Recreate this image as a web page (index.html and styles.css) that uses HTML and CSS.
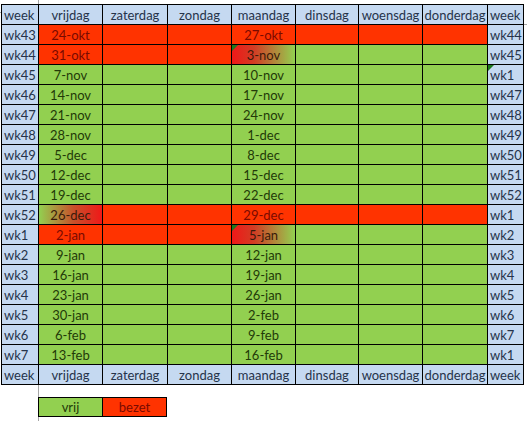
FILE: index.html
```html
<!DOCTYPE html>
<html>
<head>
<meta charset="utf-8">
<link rel="stylesheet" href="styles.css">
</head>
<body>
<div class="sheet">
  <div class="h l">week</div><div class="h">vrijdag</div><div class="h">zaterdag</div><div class="h">zondag</div><div class="h">maandag</div><div class="h">dinsdag</div><div class="h">woensdag</div><div class="h">donderdag</div><div class="h l">week</div>

  <div class="w">wk43</div><div class="r">24-okt</div><div class="r"></div><div class="r"></div><div class="r">27-okt</div><div class="r"></div><div class="r"></div><div class="r"></div><div class="w">wk44</div>
  <div class="w">wk44</div><div class="r">31-okt</div><div class="r"></div><div class="r"></div><div class="gr tri">3-nov</div><div class="g"></div><div class="g"></div><div class="g"></div><div class="w">wk45</div>
  <div class="w">wk45</div><div class="g">7-nov</div><div class="g"></div><div class="g"></div><div class="g">10-nov</div><div class="g"></div><div class="g"></div><div class="g"></div><div class="w tri">wk1</div>
  <div class="w">wk46</div><div class="g">14-nov</div><div class="g"></div><div class="g"></div><div class="g">17-nov</div><div class="g"></div><div class="g"></div><div class="g"></div><div class="w">wk47</div>
  <div class="w">wk47</div><div class="g">21-nov</div><div class="g"></div><div class="g"></div><div class="g">24-nov</div><div class="g"></div><div class="g"></div><div class="g"></div><div class="w">wk48</div>
  <div class="w">wk48</div><div class="g">28-nov</div><div class="g"></div><div class="g"></div><div class="g">1-dec</div><div class="g"></div><div class="g"></div><div class="g"></div><div class="w">wk49</div>
  <div class="w">wk49</div><div class="g">5-dec</div><div class="g"></div><div class="g"></div><div class="g">8-dec</div><div class="g"></div><div class="g"></div><div class="g"></div><div class="w">wk50</div>
  <div class="w">wk50</div><div class="g">12-dec</div><div class="g"></div><div class="g"></div><div class="g">15-dec</div><div class="g"></div><div class="g"></div><div class="g"></div><div class="w">wk51</div>
  <div class="w">wk51</div><div class="g">19-dec</div><div class="g"></div><div class="g"></div><div class="g">22-dec</div><div class="g"></div><div class="g"></div><div class="g"></div><div class="w">wk52</div>
  <div class="w">wk52</div><div class="rg">26-dec</div><div class="r"></div><div class="r"></div><div class="r">29-dec</div><div class="r"></div><div class="r"></div><div class="r"></div><div class="w">wk1</div>
  <div class="w">wk1</div><div class="r">2-jan</div><div class="r"></div><div class="r"></div><div class="gr tri">5-jan</div><div class="g"></div><div class="g"></div><div class="g"></div><div class="w">wk2</div>
  <div class="w">wk2</div><div class="g">9-jan</div><div class="g"></div><div class="g"></div><div class="g">12-jan</div><div class="g"></div><div class="g"></div><div class="g"></div><div class="w">wk3</div>
  <div class="w">wk3</div><div class="g">16-jan</div><div class="g"></div><div class="g"></div><div class="g">19-jan</div><div class="g"></div><div class="g"></div><div class="g"></div><div class="w">wk4</div>
  <div class="w">wk4</div><div class="g">23-jan</div><div class="g"></div><div class="g"></div><div class="g">26-jan</div><div class="g"></div><div class="g"></div><div class="g"></div><div class="w">wk5</div>
  <div class="w">wk5</div><div class="g">30-jan</div><div class="g"></div><div class="g"></div><div class="g">2-feb</div><div class="g"></div><div class="g"></div><div class="g"></div><div class="w">wk6</div>
  <div class="w">wk6</div><div class="g">6-feb</div><div class="g"></div><div class="g"></div><div class="g">9-feb</div><div class="g"></div><div class="g"></div><div class="g"></div><div class="w">wk7</div>
  <div class="w">wk7</div><div class="g">13-feb</div><div class="g"></div><div class="g"></div><div class="g">16-feb</div><div class="g"></div><div class="g"></div><div class="g"></div><div class="w">wk1</div>

  <div class="h l">week</div><div class="h">vrijdag</div><div class="h">zaterdag</div><div class="h">zondag</div><div class="h">maandag</div><div class="h">dinsdag</div><div class="h">woensdag</div><div class="h">donderdag</div><div class="h l">week</div>
</div>
<div class="legend">
  <div class="g">vrij</div><div class="r">bezet</div>
</div>
</body>
</html>
```
FILE: styles.css
```css
html, body {
  margin: 0;
  padding: 0;
}
body {
  width: 527px;
  height: 421px;
  overflow: hidden;
  font-family: Lato, "Open Sans", sans-serif;
  font-size: 13px;
  background:
    linear-gradient(to right, transparent 38px, #a6a6a6 38px, #a6a6a6 39px, transparent 39px),
    linear-gradient(#a6a6a6, #a6a6a6) 0 12px / 2px 1px no-repeat,
    linear-gradient(#a6a6a6, #a6a6a6) 523px 24px / 4px 1px no-repeat,
    #fff;
}
.sheet {
  margin: 4px 0 0 1px;
  width: 523px;
  display: grid;
  grid-template-columns: 36px 63px 64px 63px 63px 62px 63px 64px 35px;
  grid-auto-rows: 19px;
  gap: 1px;
  padding: 1px;
  box-sizing: border-box;
  background: #000;
}
.sheet > div {
  line-height: 20px;
  text-align: center;
  white-space: nowrap;
  overflow: hidden;
  position: relative;
}
.h {
  background: #c5d9f1;
  color: #25334a;
}
.sheet > .l,
.sheet > .w {
  text-align: left;
  padding-left: 2px;
}
.w {
  background: #c5d9f1;
  color: #25334a;
}
.g {
  background: #92d050;
  color: #223a08;
}
.r {
  background: #ff3300;
  color: #7a0a00;
}
.gr {
  background: linear-gradient(to right, #f01818 0%, #d23c24 35%, #92d050 100%);
  color: #3a1a0a;
}
.rg {
  background: linear-gradient(to right, #92d050 0%, #c8502a 55%, #f01818 100%);
  color: #3a1a0a;
}
.tri::before {
  content: "";
  position: absolute;
  left: 0;
  top: 0;
  border-top: 6px solid #1f7a1f;
  border-right: 6px solid transparent;
}
.legend {
  margin: 12px 0 0 38px;
  display: flex;
  width: 129px;
  border: 1px solid #000;
  background: #000;
  gap: 1px;
  box-sizing: border-box;
}
.legend > div {
  width: 63px;
  height: 18px;
  line-height: 19px;
  text-align: center;
}
```
